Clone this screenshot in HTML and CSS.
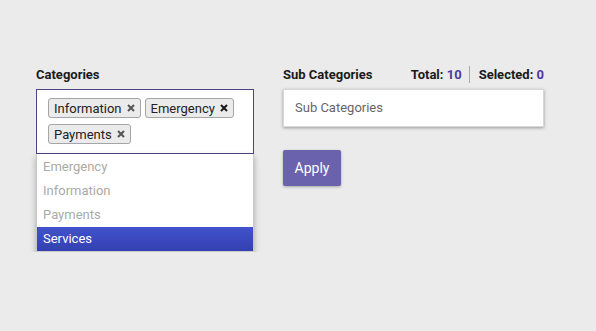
FILE: index.html
```html
<!DOCTYPE html>
<html lang="en">
<head>
  <meta charset="UTF-8" />
  <title>Categories</title>
  <link rel="stylesheet" href="styles.css">
</head>
<body>
  <div class="page">
    <div class="col col-left">
      <div class="head">
        <span class="title">Categories</span>
      </div>
      <div class="picker">
        <span class="tag">Information <svg class="x" viewBox="0 0 8 8"><path d="M1 1L7 7M7 1L1 7"/></svg></span>
        <span class="tag">Emergency <svg class="x dark" viewBox="0 0 8 8"><path d="M1 1L7 7M7 1L1 7"/></svg></span>
        <span class="tag">Payments <svg class="x" viewBox="0 0 8 8"><path d="M1 1L7 7M7 1L1 7"/></svg></span>
      </div>
      <ul class="dropdown">
        <li>Emergency</li>
        <li>Information</li>
        <li>Payments</li>
        <li class="active">Services</li>
      </ul>
    </div>

    <div class="col col-right">
      <div class="head">
        <span class="title">Sub Categories</span>
        <span class="counts">
          <span class="count">Total: <em>10</em></span>
          <span class="sep"></span>
          <span class="count">Selected: <em>0</em></span>
        </span>
      </div>
      <div class="subbox">Sub Categories</div>
      <button class="apply">Apply</button>
    </div>
  </div>
</body>
</html>
```

FILE: styles.css
```css
body {
  margin: 0;
  background: #ebebeb;
  font-family: Roboto, "Liberation Sans", sans-serif;
  color: #222;
}
.page {
  display: flex;
  gap: 29px;
  padding: 65px 0 0 36px;
}
.col-left {
  width: 218px;
}
.col-right {
  width: 261px;
}
.head {
  display: flex;
  align-items: center;
  justify-content: space-between;
  height: 18px;
  margin-bottom: 6px;
}
.title {
  font-size: 13px;
  font-weight: 700;
  color: #1a1a1a;
}
.counts {
  display: flex;
  align-items: center;
  font-size: 13px;
  font-weight: 700;
  color: #1a1a1a;
}
.count em {
  font-style: normal;
  color: #4a3aa0;
}
.sep {
  width: 1px;
  height: 17px;
  background: #aaa;
  margin: 0 9px 0 7px;
}
.picker {
  box-sizing: border-box;
  height: 65px;
  border: 1px solid #4c4585;
  background: #fff;
  padding: 8px 10px 0 11px;
  display: flex;
  flex-wrap: wrap;
  align-content: flex-start;
  gap: 6px 4px;
}
.tag {
  box-sizing: border-box;
  height: 20px;
  display: inline-flex;
  align-items: center;
  padding: 0 5px;
  border: 1px solid #a5a5a5;
  border-radius: 3px;
  background: #ebebeb;
  font-size: 13px;
  color: #222;
}
.x {
  width: 8px;
  height: 8px;
  margin-left: 5px;
  stroke: #555;
  stroke-width: 2;
}
.x.dark {
  stroke: #1a1a1a;
}
.dropdown {
  list-style: none;
  margin: 0;
  padding: 1px 0 0;
  background: #fff;
  border: 1px solid #c9c9c9;
  border-top: none;
  box-shadow: 0 3px 6px rgba(0, 0, 0, 0.3);
}
.dropdown li {
  height: 24px;
  line-height: 24px;
  padding-left: 6px;
  font-size: 13px;
  color: #aaa;
}
.dropdown li.active {
  background: linear-gradient(#4152cc, #3340b0);
  color: #fff;
}
.subbox {
  box-sizing: border-box;
  height: 38px;
  line-height: 36px;
  padding-left: 11px;
  background: #fff;
  border: 1px solid #d8d8d8;
  box-shadow: 0 1px 3px rgba(0, 0, 0, 0.35);
  font-size: 13px;
  color: #666;
}
.apply {
  display: block;
  margin-top: 23px;
  width: 58px;
  height: 36px;
  border: none;
  border-radius: 2px;
  background: #6b62ae;
  box-shadow: 0 1px 3px rgba(0, 0, 0, 0.3);
  color: #fff;
  font-family: Roboto, "Liberation Sans", sans-serif;
  font-size: 14px;
}
```
